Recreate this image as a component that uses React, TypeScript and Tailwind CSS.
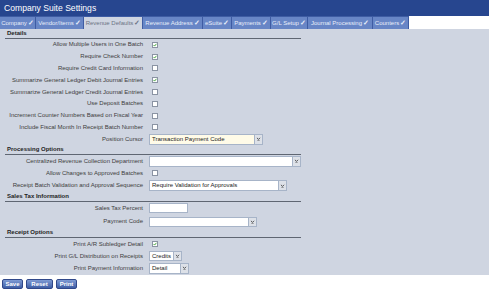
import type { ReactNode } from "react";

const tabs = [
  { name: "Company", w: "w-[36px]" },
  { name: "Vendor/Items", w: "w-[48px]" },
  { name: "Revenue Defaults", w: "w-[59px]", active: true },
  { name: "Revenue Address", w: "w-[60px]" },
  { name: "eSuite", w: "w-[29px]" },
  { name: "Payments", w: "w-[39px]" },
  { name: "G/L Setup", w: "w-[37px]" },
  { name: "Journal Processing", w: "w-[65px]" },
  { name: "Counters", w: "w-[36px]" },
];

function Check({ on }: { on?: boolean }) {
  return (
    <span className="ml-[3px] flex h-[6px] w-[6px] items-center justify-center border border-[#8a93a3] bg-white">
      {on && (
        <svg viewBox="0 0 6 6" className="h-[6px] w-[6px]">
          <path d="M0.8 3 L2.4 4.6 L5.2 1.2" fill="none" stroke="#2f9a28" strokeWidth="1.3" />
        </svg>
      )}
    </span>
  );
}

function Select({
  w,
  h = "h-[11px]",
  value,
  bg = "bg-white",
}: {
  w: string;
  h?: string;
  value?: string;
  bg?: string;
}) {
  return (
    <div className={`flex ${w} ${h} border border-[#a7b4c8] ${bg}`}>
      <div className="flex-1 overflow-hidden whitespace-nowrap pl-[2px] leading-[9px] text-[#222]">{value}</div>
      <div className="flex w-[8px] items-center justify-center border-l border-[#a7b4c8] bg-[#dde1e8]">
        <svg viewBox="0 0 6 5" className="h-[4px] w-[5px]">
          <path d="M1 1 L3 3 L5 1" fill="none" stroke="#444" strokeWidth="1.1" />
          <path d="M1.5 4.3 H4.5" stroke="#666" strokeWidth="0.8" />
        </svg>
      </div>
    </div>
  );
}

function Row({ label, h, children }: { label: string; h: string; children?: ReactNode }) {
  return (
    <div className={`flex items-center ${h}`}>
      <div className="w-[143px] shrink-0 whitespace-nowrap text-right text-[#3d3d3d]">{label}</div>
      <div className="ml-[6px] flex items-center">{children}</div>
    </div>
  );
}

function Heading({ title }: { title: string }) {
  return (
    <div className="ml-[5px] flex h-[10px] w-[296px] items-center border-b border-[#5f6672] pl-[2px] font-bold text-[#1e1e1e]">
      {title}
    </div>
  );
}

export default function App() {
  return (
    <div className="h-[291px] w-[489px] bg-white font-['Liberation_Sans',Arial,sans-serif] text-[6px]">
      <div className="flex h-[16px] items-center bg-[#27468f] pl-[4px] text-[8.6px] text-white">
        Company Suite Settings
      </div>
      <div className="flex h-[13px]">
        {tabs.map((t) => (
          <div
            key={t.name}
            className={`flex ${t.w} items-center justify-center whitespace-nowrap border-r border-t border-[#3e5ca3] ${
              t.active ? "bg-[#cfd5e1] text-[#6b7484]" : "bg-[#6886c6] text-[#e8eefa]"
            }`}
          >
            {t.name}
            <span className="ml-[1px] text-[6.5px] font-bold">✓</span>
          </div>
        ))}
      </div>
      <div className="bg-[#cfd5e1] pb-[1px]">
        <Heading title="Details" />
        <Row label="Allow Multiple Users in One Batch" h="h-[11.8px]">
          <Check on />
        </Row>
        <Row label="Require Check Number" h="h-[11.8px]">
          <Check on />
        </Row>
        <Row label="Require Credit Card Information" h="h-[11.8px]">
          <Check />
        </Row>
        <Row label="Summarize General Ledger Debit Journal Entries" h="h-[11.8px]">
          <Check on />
        </Row>
        <Row label="Summarize General Ledger Credit Journal Entries" h="h-[11.8px]">
          <Check />
        </Row>
        <Row label="Use Deposit Batches" h="h-[11.8px]">
          <Check />
        </Row>
        <Row label="Increment Counter Numbers Based on Fiscal Year" h="h-[11.8px]">
          <Check />
        </Row>
        <Row label="Include Fiscal Month In Receipt Batch Number" h="h-[11.8px]">
          <Check />
        </Row>
        <Row label="Position Cursor" h="h-[11.8px]">
          <Select w="w-[114px]" value="Transaction Payment Code" bg="bg-[#fffbe8]" />
        </Row>

        <Heading title="Processing Options" />
        <Row label="Centralized Revenue Collection Department" h="h-[12.2px]">
          <Select w="w-[152px]" />
        </Row>
        <Row label="Allow Changes to Approved Batches" h="h-[12.2px]">
          <Check />
        </Row>
        <Row label="Receipt Batch Validation and Approval Sequence" h="h-[12.2px]">
          <Select w="w-[138px]" value="Require Validation for Approvals" />
        </Row>

        <Heading title="Sales Tax Information" />
        <Row label="Sales Tax Percent" h="h-[13.3px]">
          <div className="h-[10px] w-[39px] border border-[#a7b4c8] bg-white" />
        </Row>
        <Row label="Payment Code" h="h-[13.3px]">
          <Select w="w-[108px]" h="h-[10px]" />
        </Row>

        <Heading title="Receipt Options" />
        <Row label="Print A/R Subledger Detail" h="h-[12px]">
          <Check on />
        </Row>
        <Row label="Print G/L Distribution on Receipts" h="h-[12px]">
          <Select w="w-[33px]" h="h-[10px]" value="Credits" />
        </Row>
        <Row label="Print Payment Information" h="h-[12px]">
          <Select w="w-[40px]" value="Detail" />
        </Row>
      </div>
      <div className="ml-[2px] mt-[4px] flex gap-[3px]">
        {["Save", "Reset", "Print"].map((b) => (
          <button
            key={b}
            className={`flex h-[9.5px] items-center justify-center rounded-[2px] border border-[#30488a] bg-gradient-to-b from-[#7f9bd3] to-[#3f5ea6] font-bold text-white ${
              b === "Reset" ? "w-[27px]" : "w-[21px]"
            }`}
          >
            {b}
          </button>
        ))}
      </div>
    </div>
  );
}
